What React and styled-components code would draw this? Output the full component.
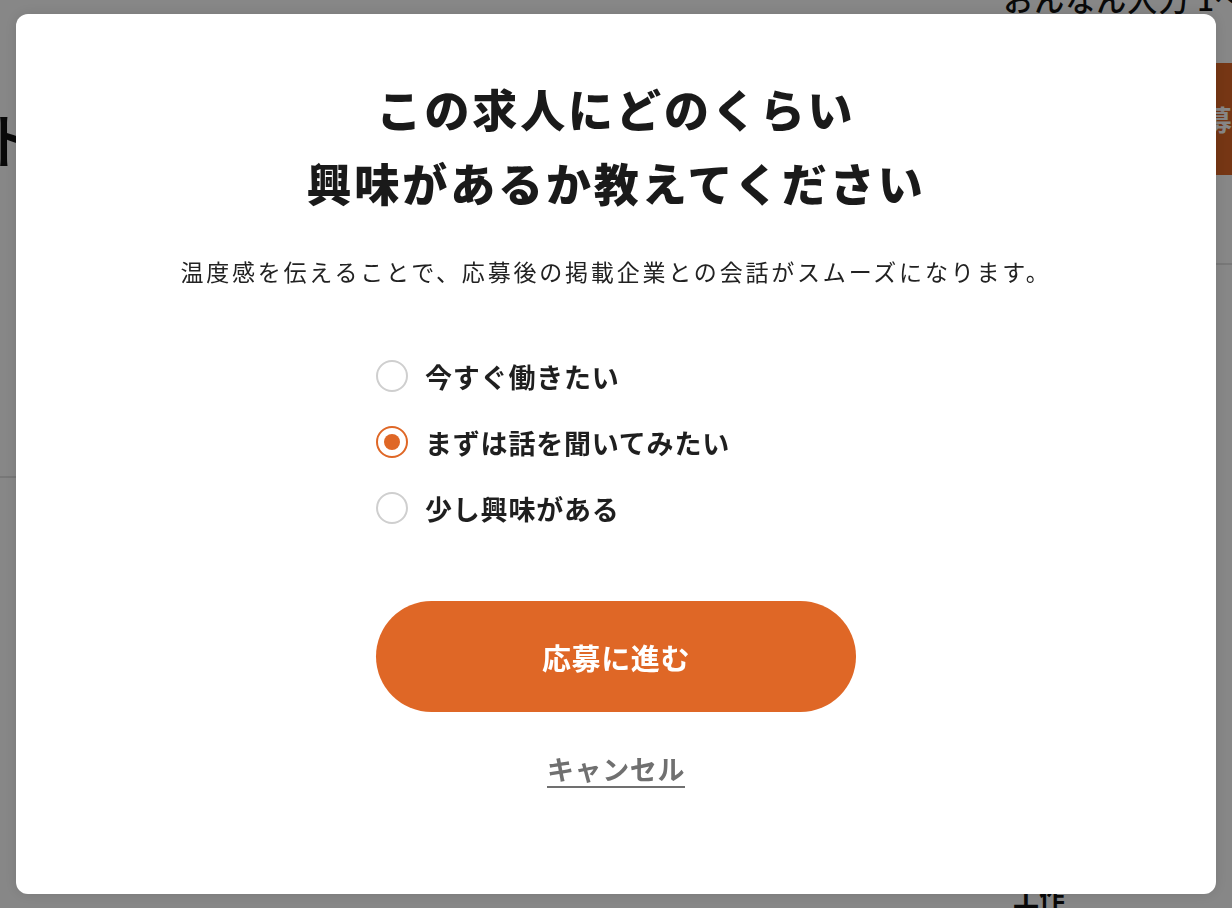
import React, { useState } from "react";
import styled, { createGlobalStyle } from "styled-components";

const GlobalStyle = createGlobalStyle`
  html, body {
    margin: 0;
    padding: 0;
    overflow: hidden;
  }
  body {
    font-family: "Noto Sans CJK JP", "Noto Sans", sans-serif;
    background: #ffffff;
  }
  * {
    box-sizing: border-box;
  }
`;

const ORANGE = "#df6726";

const options = [
  { id: "now", label: "今すぐ働きたい" },
  { id: "talk", label: "まずは話を聞いてみたい" },
  { id: "some", label: "少し興味がある" },
];

const App = () => {
  const [value, setValue] = useState("talk");

  return (
    <>
      <GlobalStyle />
      <Page>
        <TopRow>
          <NavText>おんなん入力 1〜</NavText>
        </TopRow>
        <HeroRow>
          <BigTitle>ト</BigTitle>
          <Cta>応募する</Cta>
        </HeroRow>
        <Columns>
          <LeftCol>
            <LeftBlock />
          </LeftCol>
          <RightCol>
            <RightBlock />
            <FootText>工作</FootText>
          </RightCol>
        </Columns>
      </Page>

      <Overlay>
        <Modal role="dialog" aria-modal="true">
          <Title>
            この求人にどのくらい
            <br />
            興味があるか教えてください
          </Title>
          <Lead>
            温度感を伝えることで、応募後の掲載企業との会話がスムーズになります。
          </Lead>

          <Choices>
            {options.map((o) => (
              <Choice key={o.id}>
                <HiddenInput
                  type="radio"
                  name="interest"
                  checked={value === o.id}
                  onChange={() => setValue(o.id)}
                />
                <Dot $checked={value === o.id} />
                <ChoiceText>{o.label}</ChoiceText>
              </Choice>
            ))}
          </Choices>

          <Submit type="button">応募に進む</Submit>
          <Cancel type="button">キャンセル</Cancel>
        </Modal>
      </Overlay>
    </>
  );
};

// background page
const Page = styled.div`
  width: 100vw;
  height: 100vh;
  overflow: hidden;
  background: #ffffff;
  color: #111;
`;

const TopRow = styled.div`
  height: 63px;
  display: flex;
  justify-content: flex-end;
  align-items: flex-start;
`;

const NavText = styled.span`
  font-size: 30px;
  font-weight: 500;
  letter-spacing: 1px;
  white-space: nowrap;
  margin-top: -24px;
  margin-right: -14px;
`;

const HeroRow = styled.div`
  height: 112px;
  display: flex;
  justify-content: space-between;
  align-items: flex-start;
`;

const BigTitle = styled.span`
  font-size: 60px;
  line-height: 60px;
  font-weight: 500;
  margin-top: 45px;
  margin-left: -19px;
`;

const Cta = styled.div`
  width: 120px;
  height: 112px;
  margin-right: -60px;
  background: ${ORANGE};
  color: #fff;
  font-size: 28px;
  font-weight: 700;
  display: flex;
  align-items: center;
  padding-left: 4px;
  white-space: nowrap;
  overflow: hidden;
`;

const Columns = styled.div`
  display: grid;
  grid-template-columns: 1fr 1fr;
`;

const LeftCol = styled.div`
  display: flex;
  flex-direction: column;
`;

const LeftBlock = styled.div`
  height: 303px;
  border-bottom: 2px solid #e2e2e2;
`;

const RightCol = styled.div`
  display: flex;
  flex-direction: column;
  align-items: flex-start;
`;

const RightBlock = styled.div`
  width: 100%;
  height: 90px;
  border-bottom: 2px solid #e2e2e2;
`;

const FootText = styled.span`
  margin-top: 612px;
  margin-left: 397px;
  font-size: 26px;
  font-weight: 700;
`;

// modal
const Overlay = styled.div`
  position: fixed;
  inset: 0;
  background: rgba(0, 0, 0, 0.47);
  display: flex;
  align-items: center;
  justify-content: center;
`;

const Modal = styled.div`
  width: 1200px;
  height: 880px;
  background: #ffffff;
  border-radius: 12px;
  box-shadow: 0 0 14px rgba(0, 0, 0, 0.12);
  padding-top: 58px;
  display: flex;
  flex-direction: column;
  align-items: center;
`;

const Title = styled.h2`
  margin: 0;
  font-size: 45px;
  line-height: 74px;
  font-weight: 800;
  letter-spacing: 2.9px;
  color: #1a1a1a;
  text-align: center;
`;

const Lead = styled.p`
  margin: 35px 0 0;
  font-size: 23px;
  line-height: 32px;
  letter-spacing: 2.8px;
  color: #222;
  text-align: center;
`;

const Choices = styled.div`
  width: 480px;
  margin-top: 73px;
  display: flex;
  flex-direction: column;
  gap: 34px;
`;

const Choice = styled.label`
  display: flex;
  align-items: center;
  gap: 17px;
  height: 32px;
  cursor: pointer;
`;

const HiddenInput = styled.input`
  position: absolute;
  opacity: 0;
  width: 0;
  height: 0;
`;

const Dot = styled.span`
  width: 32px;
  height: 32px;
  flex-shrink: 0;
  border-radius: 50%;
  border: 2px solid ${(p) => (p.$checked ? ORANGE : "#cfcfcf")};
  display: flex;
  align-items: center;
  justify-content: center;

  &::after {
    content: "";
    width: 16px;
    height: 16px;
    border-radius: 50%;
    background: ${ORANGE};
    display: ${(p) => (p.$checked ? "block" : "none")};
  }
`;

const ChoiceText = styled.span`
  font-size: 27px;
  font-weight: 700;
  letter-spacing: 0.8px;
  color: #1f1f1f;
  white-space: nowrap;
`;

const Submit = styled.button`
  margin-top: 77px;
  width: 480px;
  height: 111px;
  border: none;
  border-radius: 56px;
  background: ${ORANGE};
  color: #ffffff;
  font-family: inherit;
  font-size: 29px;
  font-weight: 700;
  letter-spacing: 0.6px;
  cursor: pointer;
`;

const Cancel = styled.button`
  margin-top: 40px;
  padding: 0;
  background: none;
  border: none;
  border-bottom: 2px solid #707070;
  font-family: inherit;
  font-size: 27px;
  line-height: 34px;
  font-weight: 700;
  letter-spacing: 0.6px;
  color: #707070;
  cursor: pointer;
`;

export default App;
